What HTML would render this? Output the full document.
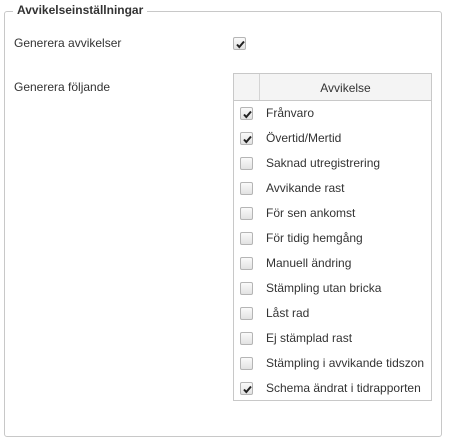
<!DOCTYPE html>
<html><head><style>
*{margin:0;padding:0;box-sizing:border-box}
body{width:451px;height:448px;background:#fff;font-family:"Liberation Sans",Arial,sans-serif;font-size:12px;color:#333;position:relative;overflow:hidden}
.fs{position:absolute;left:4px;top:11px;width:438px;height:426px;border:1px solid #c8c8c8;border-radius:3px}
.lg{position:absolute;left:13px;top:3px;background:#fff;padding:0 4px;font-weight:bold;font-size:12px;color:#333}
.t{position:absolute;font-size:12px}
.cb{position:absolute;width:13px;height:13px;border:1px solid #b5b5b5;border-radius:2px;background:linear-gradient(#fafafa,#e2e2e2)}
.cb svg{position:absolute;left:1px;top:1px}
.tbl{position:absolute;left:233px;top:73px;width:199px;height:328px;border:1px solid #c8c8c8}
.hd{position:absolute;left:0;top:0;width:197px;height:27px;background:#f4f4f4;border-bottom:1px solid #c8c8c8}
.hd .dv{position:absolute;left:25px;top:0;width:1px;height:26px;background:#d4d4d4}
.hd span{position:absolute;left:26px;right:0;top:7px;text-align:center}
</style></head><body>
<div class="fs"></div>
<div class="lg">Avvikelseinställningar</div>
<div class="t" style="left:14px;top:36px">Generera avvikelser</div>
<div class="cb" style="left:233px;top:37px"><svg width="11" height="11" viewBox="0 0 11 11"><path d="M2 5.5L4.3 8L9 2.5" stroke="#222" stroke-width="2" fill="none"/></svg></div>
<div class="t" style="left:14px;top:80px">Generera följande</div>
<div class="tbl"><div class="hd"><div class="dv"></div><span>Avvikelse</span></div></div>
<div id="rows"></div>
<script>
var items=[["Frånvaro",1],["Övertid/Mertid",1],["Saknad utregistrering",0],["Avvikande rast",0],["För sen ankomst",0],["För tidig hemgång",0],["Manuell ändring",0],["Stämpling utan bricka",0],["Låst rad",0],["Ej stämplad rast",0],["Stämpling i avvikande tidszon",0],["Schema ändrat i tidrapporten",1]];
var h="";items.forEach(function(it,i){var y=106+i*25;
h+='<div class="cb" style="left:240px;top:'+(y+1)+'px">'+(it[1]?'<svg width="11" height="11" viewBox="0 0 11 11"><path d="M2 5.5L4.3 8L9 2.5" stroke="#222" stroke-width="2" fill="none"/></svg>':'')+'</div>';
h+='<div class="t" style="left:266px;top:'+y+'px">'+it[0]+'</div>';});
document.getElementById("rows").innerHTML=h;
</script>
</body></html>
